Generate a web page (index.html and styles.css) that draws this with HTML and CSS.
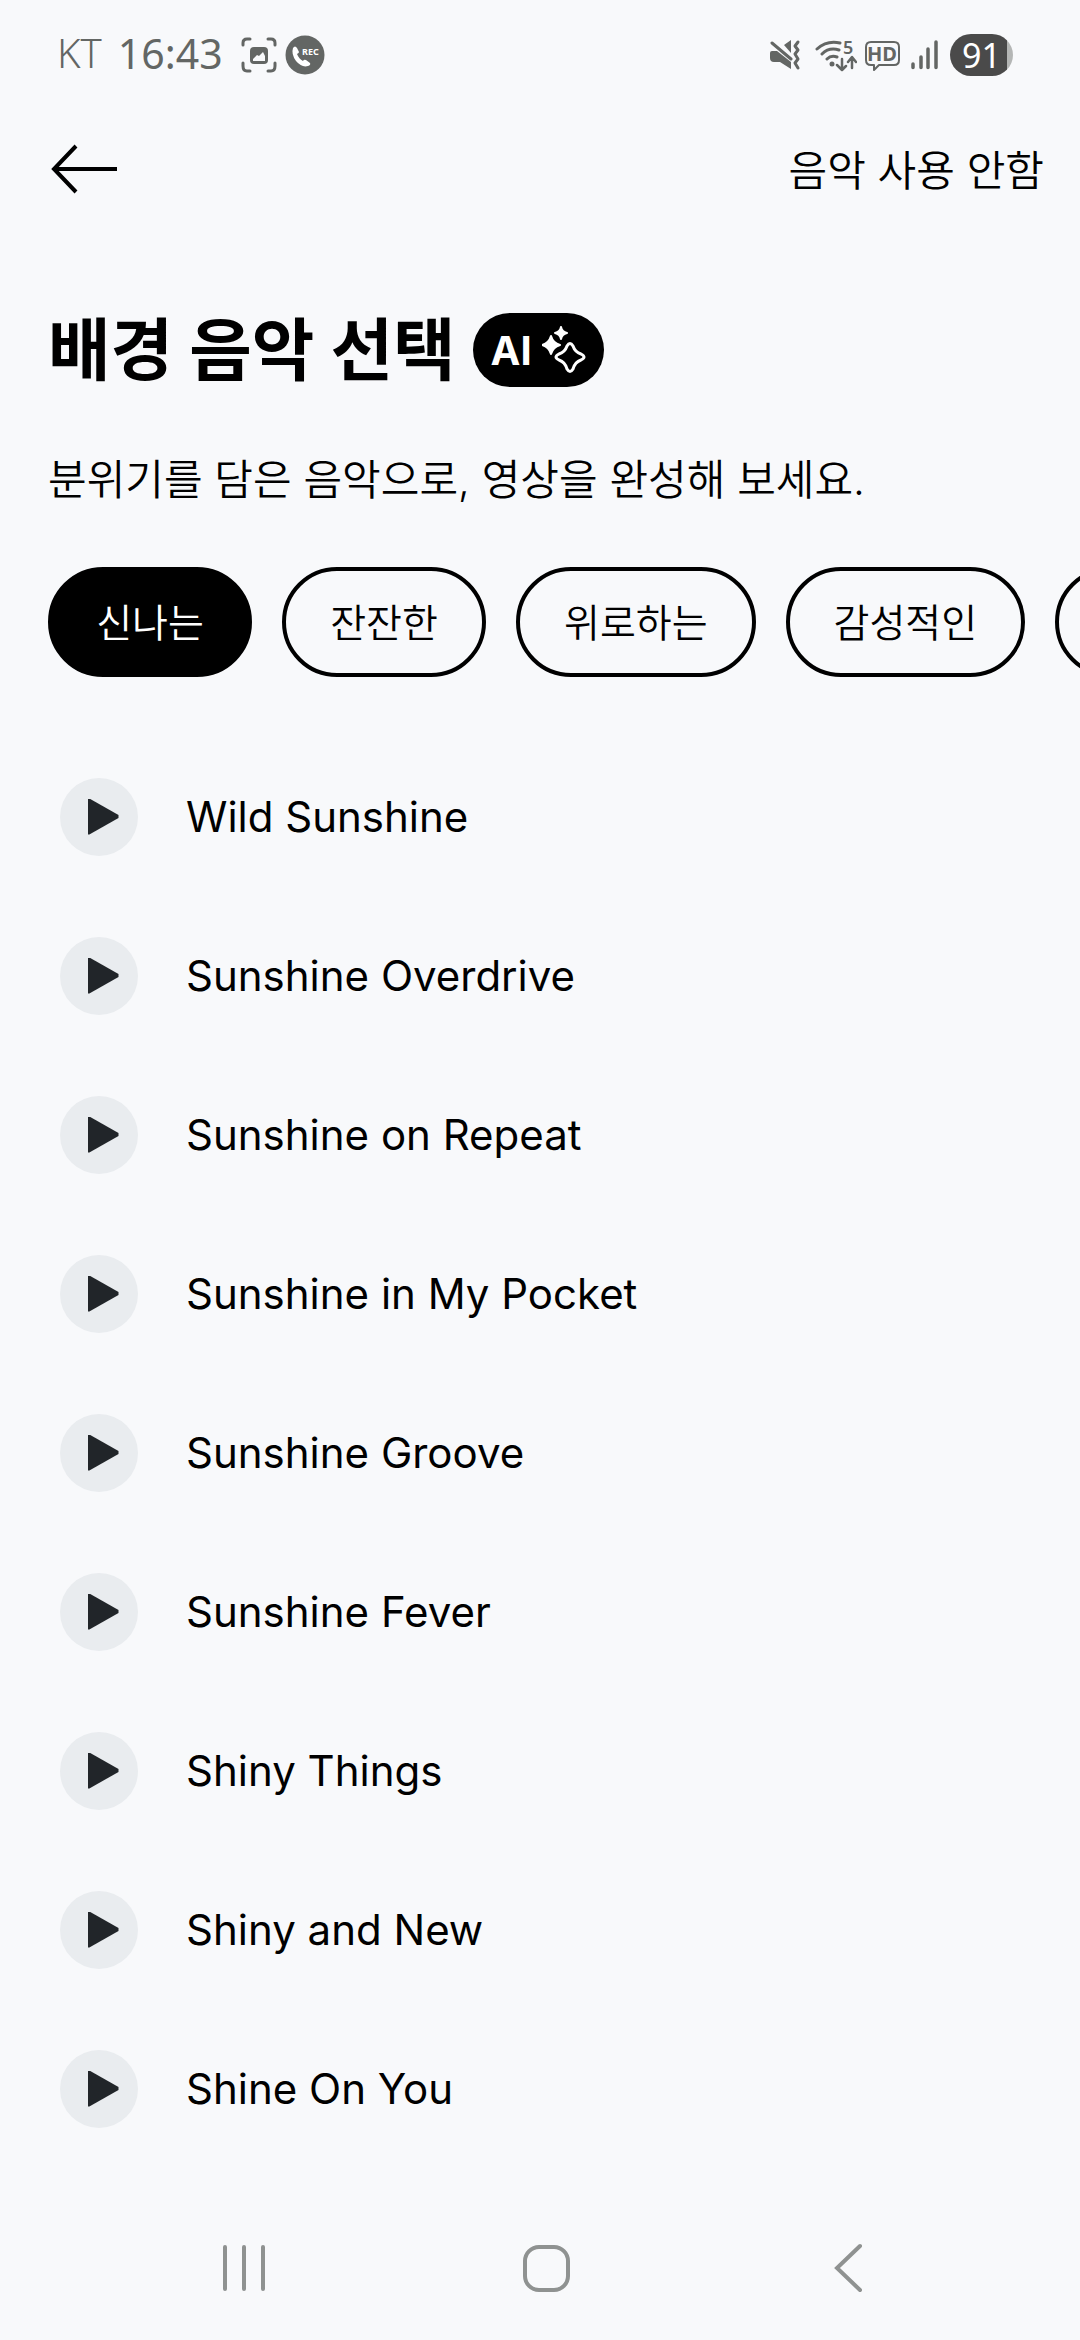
FILE: index.html
```html
<!DOCTYPE html>
<html lang="ko">
<head>
  <meta charset="UTF-8">
  <meta name="viewport" content="width=device-width, initial-scale=1.0">
  <title>배경 음악 선택</title>
  <link rel="stylesheet" href="styles.css">
</head>
<body>
  <!-- Status bar -->
  <div class="status-bar">
    <div class="status-left">
      <span class="carrier">KT</span>
      <span class="clock">16:43</span>
      <svg width="36" height="42" viewBox="0 0 36 42" aria-hidden="true">
        <path d="M2 11V9Q2 5 6 5H9M27 5H30Q34 5 34 9V11M34 29V32Q34 37 30 37H27M9 37H6Q2 37 2 32V29" fill="none" stroke="#636664" stroke-width="3" stroke-linecap="round"/>
        <rect x="9" y="13" width="18" height="17" rx="4" fill="#636664"/>
        <path d="M12 27V25L16 21L18 22L22 18L24 22V27Z" fill="#f8f9fb"/>
      </svg>
      <svg width="40" height="42" viewBox="0 0 40 42" aria-hidden="true">
        <circle cx="20" cy="21" r="19.500" fill="#636664"/>
        <path d="M8 14Q10 11 12 14L14 18Q14 19 12 20Q14 25 18 27Q19 25 21 26L25 29Q26 31 23 32Q17 34 11 27Q6 20 8 14Z" fill="#fff"/>
        <text x="17" y="21" class="rec-text">REC</text>
      </svg>
    </div>
    <div class="status-right">
      <svg width="37" height="42" viewBox="0 0 37 42" aria-hidden="true">
        <path d="M2 17H7L21 28V35L10 28H4Q0 28 0 24V19Q0 17 2 17ZM14 11L21 6V19Z" fill="#636664"/>
        <path d="M2 9L21 25" stroke="#636664" stroke-width="3" stroke-linecap="round"/>
        <path d="M28 8L25 12L28 16L25 20L28 25L25 29L28 34" fill="none" stroke="#636664" stroke-width="3" stroke-linecap="round" stroke-linejoin="round"/>
      </svg>
      <svg width="42" height="42" viewBox="0 0 42 42" aria-hidden="true">
        <g fill="none" stroke="#636664" stroke-width="3" stroke-linecap="round" stroke-linejoin="round">
          <path d="M2 15Q12 6 25 9M7 20Q14 13 24 16M12 25Q16 21 22 23"/>
          <path d="M27 25V35M22 31L27 36L31 32M37 34V24M33 28L37 23L41 28" stroke-width="2.500"/>
        </g>
        <circle cx="17" cy="30" r="2.500" fill="#636664"/>
        <text x="28" y="20" class="wifi-text">5</text>
      </svg>
      <svg width="35" height="42" viewBox="0 0 35 42" aria-hidden="true">
        <path d="M6 8H29Q34 8 34 13V26Q34 31 29 31H14L9 36V31H6Q1 31 1 26V13Q1 8 6 8Z" fill="none" stroke="#636664" stroke-width="2" stroke-linejoin="round"/>
        <text x="17" y="27" class="hd-text">HD</text>
      </svg>
      <svg width="34" height="42" viewBox="0 0 34 42" aria-hidden="true">
        <path d="M5 30V33.500M13 23V33.500M20 15V33.500M28 8V33.500" stroke="#636664" stroke-width="3.500" stroke-linecap="round"/>
      </svg>
      <span class="battery">91</span>
    </div>
  </div>

  <!-- Top navigation -->
  <header class="top-bar">
    <button type="button" class="back-btn" aria-label="뒤로">
      <svg width="68" height="50" viewBox="0 0 68 50" aria-hidden="true">
        <path d="M26 2L4 25L26 48M3 25H67" fill="none" stroke="#000" stroke-width="4"/>
      </svg>
    </button>
    <button type="button" class="skip-btn">음악 사용 안함</button>
  </header>

  <main>
    <div class="title-row">
      <h1>배경 음악 선택</h1>
      <span class="ai-badge">AI
        <svg width="44" height="48" viewBox="0 0 44 48" aria-hidden="true">
          <path d="M19 1Q20 6 25 7Q20 8 19 13Q18 8 13 7Q18 6 19 1Z" fill="#fff" stroke="#fff" stroke-width="2" stroke-linejoin="round"/>
          <path d="M9 10Q11 17 18 19Q11 21 9 28Q7 21 0 19Q7 17 9 10Z" fill="#fff" stroke="#fff" stroke-width="2" stroke-linejoin="round"/>
          <path d="M25 20Q28 15 31 20Q33 26 39 28Q45 31 39 34Q33 36 31 43Q28 48 25 43Q23 36 17 34Q11 31 17 28Q23 26 25 20Z" fill="none" stroke="#fff" stroke-width="3" stroke-linejoin="round"/>
        </svg>
      </span>
    </div>
    <p class="subtitle">분위기를 담은 음악으로, 영상을 완성해 보세요.</p>

    <!-- Mood filter -->
    <div class="chips">
      <button type="button" class="chip active">신나는</button>
      <button type="button" class="chip">잔잔한</button>
      <button type="button" class="chip">위로하는</button>
      <button type="button" class="chip">감성적인</button>
      <button type="button" class="chip" aria-label="다음 분위기"></button>
    </div>

    <!-- Track list -->
    <ul class="tracks">
      <li><button type="button" class="track"><span class="play"></span>Wild Sunshine</button></li>
      <li><button type="button" class="track"><span class="play"></span>Sunshine Overdrive</button></li>
      <li><button type="button" class="track"><span class="play"></span>Sunshine on Repeat</button></li>
      <li><button type="button" class="track"><span class="play"></span>Sunshine in My Pocket</button></li>
      <li><button type="button" class="track"><span class="play"></span>Sunshine Groove</button></li>
      <li><button type="button" class="track"><span class="play"></span>Sunshine Fever</button></li>
      <li><button type="button" class="track"><span class="play"></span>Shiny Things</button></li>
      <li><button type="button" class="track"><span class="play"></span>Shiny and New</button></li>
      <li><button type="button" class="track"><span class="play"></span>Shine On You</button></li>
    </ul>
  </main>

  <!-- System navigation -->
  <nav class="system-nav">
    <button type="button" aria-label="최근 앱">
      <svg width="50" height="50" viewBox="0 0 50 50" aria-hidden="true">
        <path d="M6 4V46M25 4V46M44 4V46" stroke="#8f9291" stroke-width="4" stroke-linecap="round"/>
      </svg>
    </button>
    <button type="button" aria-label="홈">
      <svg width="50" height="50" viewBox="0 0 50 50" aria-hidden="true">
        <rect x="4" y="4" width="43" height="43" rx="14" fill="none" stroke="#8f9291" stroke-width="4"/>
      </svg>
    </button>
    <button type="button" aria-label="뒤로 가기">
      <svg width="50" height="50" viewBox="0 0 50 50" aria-hidden="true">
        <path d="M37 3L14 25L37 47" fill="none" stroke="#8f9291" stroke-width="4" stroke-linecap="round"/>
      </svg>
    </button>
  </nav>
</body>
</html>
```
FILE: styles.css
```css
* {
  box-sizing: border-box;
}

body {
  margin: 0;
  min-height: 100vh;
  display: flex;
  flex-direction: column;
  overflow-x: hidden;
  background-color: #f8f9fb;
  color: #000;
  font-family: Inter, "Noto Sans CJK KR", sans-serif;
}

button {
  padding: 0;
  border: none;
  background: none;
  color: inherit;
  font-family: inherit;
  cursor: pointer;
}

svg {
  display: block;
  flex-shrink: 0;
}

/* Status bar */
.status-bar {
  display: flex;
  justify-content: space-between;
  align-items: center;
  height: 110px;
  padding: 0 67px 0 57px;
  color: #636664;
  font-family: "Noto Sans", sans-serif;
}

.status-left,
.status-right {
  display: flex;
  align-items: center;
  gap: 8px;
}

.carrier,
.clock {
  padding-bottom: 4px;
  font-size: 40px;
  line-height: 50px;
}

.carrier {
  font-weight: 300;
}

.clock {
  margin: 0 10px 0 8px;
  font-size: 41px;
}

.rec-text {
  fill: #fff;
  font-size: 9px;
  font-weight: 700;
}

.wifi-text {
  fill: #636664;
  font-size: 18px;
  font-weight: 600;
}

.hd-text {
  fill: #636664;
  font-size: 20px;
  font-weight: 700;
  text-anchor: middle;
}

.battery {
  width: 63px;
  border-radius: 21px;
  background: linear-gradient(to right, #4a4a4a 90%, #b4b6b5 90%);
  color: #fff;
  font-size: 34px;
  line-height: 42px;
  text-align: center;
}

/* Top navigation */
.top-bar {
  display: flex;
  justify-content: space-between;
  align-items: center;
  height: 118px;
  padding: 0 36px 0 50px;
}

.skip-btn {
  padding-bottom: 4px;
  font-size: 42px;
}

/* Title */
.title-row {
  display: flex;
  align-items: center;
  gap: 17px;
  padding: 72px 48px 0;
}

h1 {
  margin: 0;
  font-size: 68px;
  font-weight: 700;
  line-height: 100px;
}

.ai-badge {
  display: flex;
  align-items: center;
  gap: 10px;
  height: 74px;
  padding: 0 18px;
  border-radius: 37px;
  background-color: #000;
  color: #fff;
  font-size: 40px;
  font-weight: 700;
}

.subtitle {
  margin: 50px 48px 57px;
  font-size: 42px;
  line-height: 60px;
}

.skip-btn,
.subtitle,
.chip {
  font-weight: 350;
}

/* Mood filter */
.chips {
  display: flex;
  gap: 30px;
  padding: 0 48px;
  overflow: hidden;
}

.chip {
  flex-shrink: 0;
  min-width: 204px;
  height: 110px;
  padding: 0 44px 4px;
  border: 4px solid #000;
  border-radius: 55px;
  font-size: 39px;
}

.chip.active {
  background-color: #000;
  color: #fff;
}

/* Track list */
.tracks {
  margin: 60px 0 0;
  padding: 0;
  list-style: none;
}

.track {
  display: flex;
  align-items: center;
  gap: 48px;
  width: 100%;
  height: 159px;
  padding: 0 60px;
  font-size: 42px;
  text-align: left;
}

.play {
  display: flex;
  align-items: center;
  justify-content: center;
  width: 78px;
  height: 78px;
  padding-left: 8px;
  border-radius: 50%;
  background-color: #e9ecef;
}

.play::before {
  content: "";
  width: 31px;
  height: 36px;
  background-color: #212529;
  clip-path: polygon(0 0, 6% 0, 100% 46%, 100% 54%, 6% 100%, 0 100%);
}

/* System navigation */
.system-nav {
  display: flex;
  justify-content: space-between;
  align-items: center;
  height: 144px;
  margin-top: auto;
  padding: 0 207px 0 219px;
}
```
